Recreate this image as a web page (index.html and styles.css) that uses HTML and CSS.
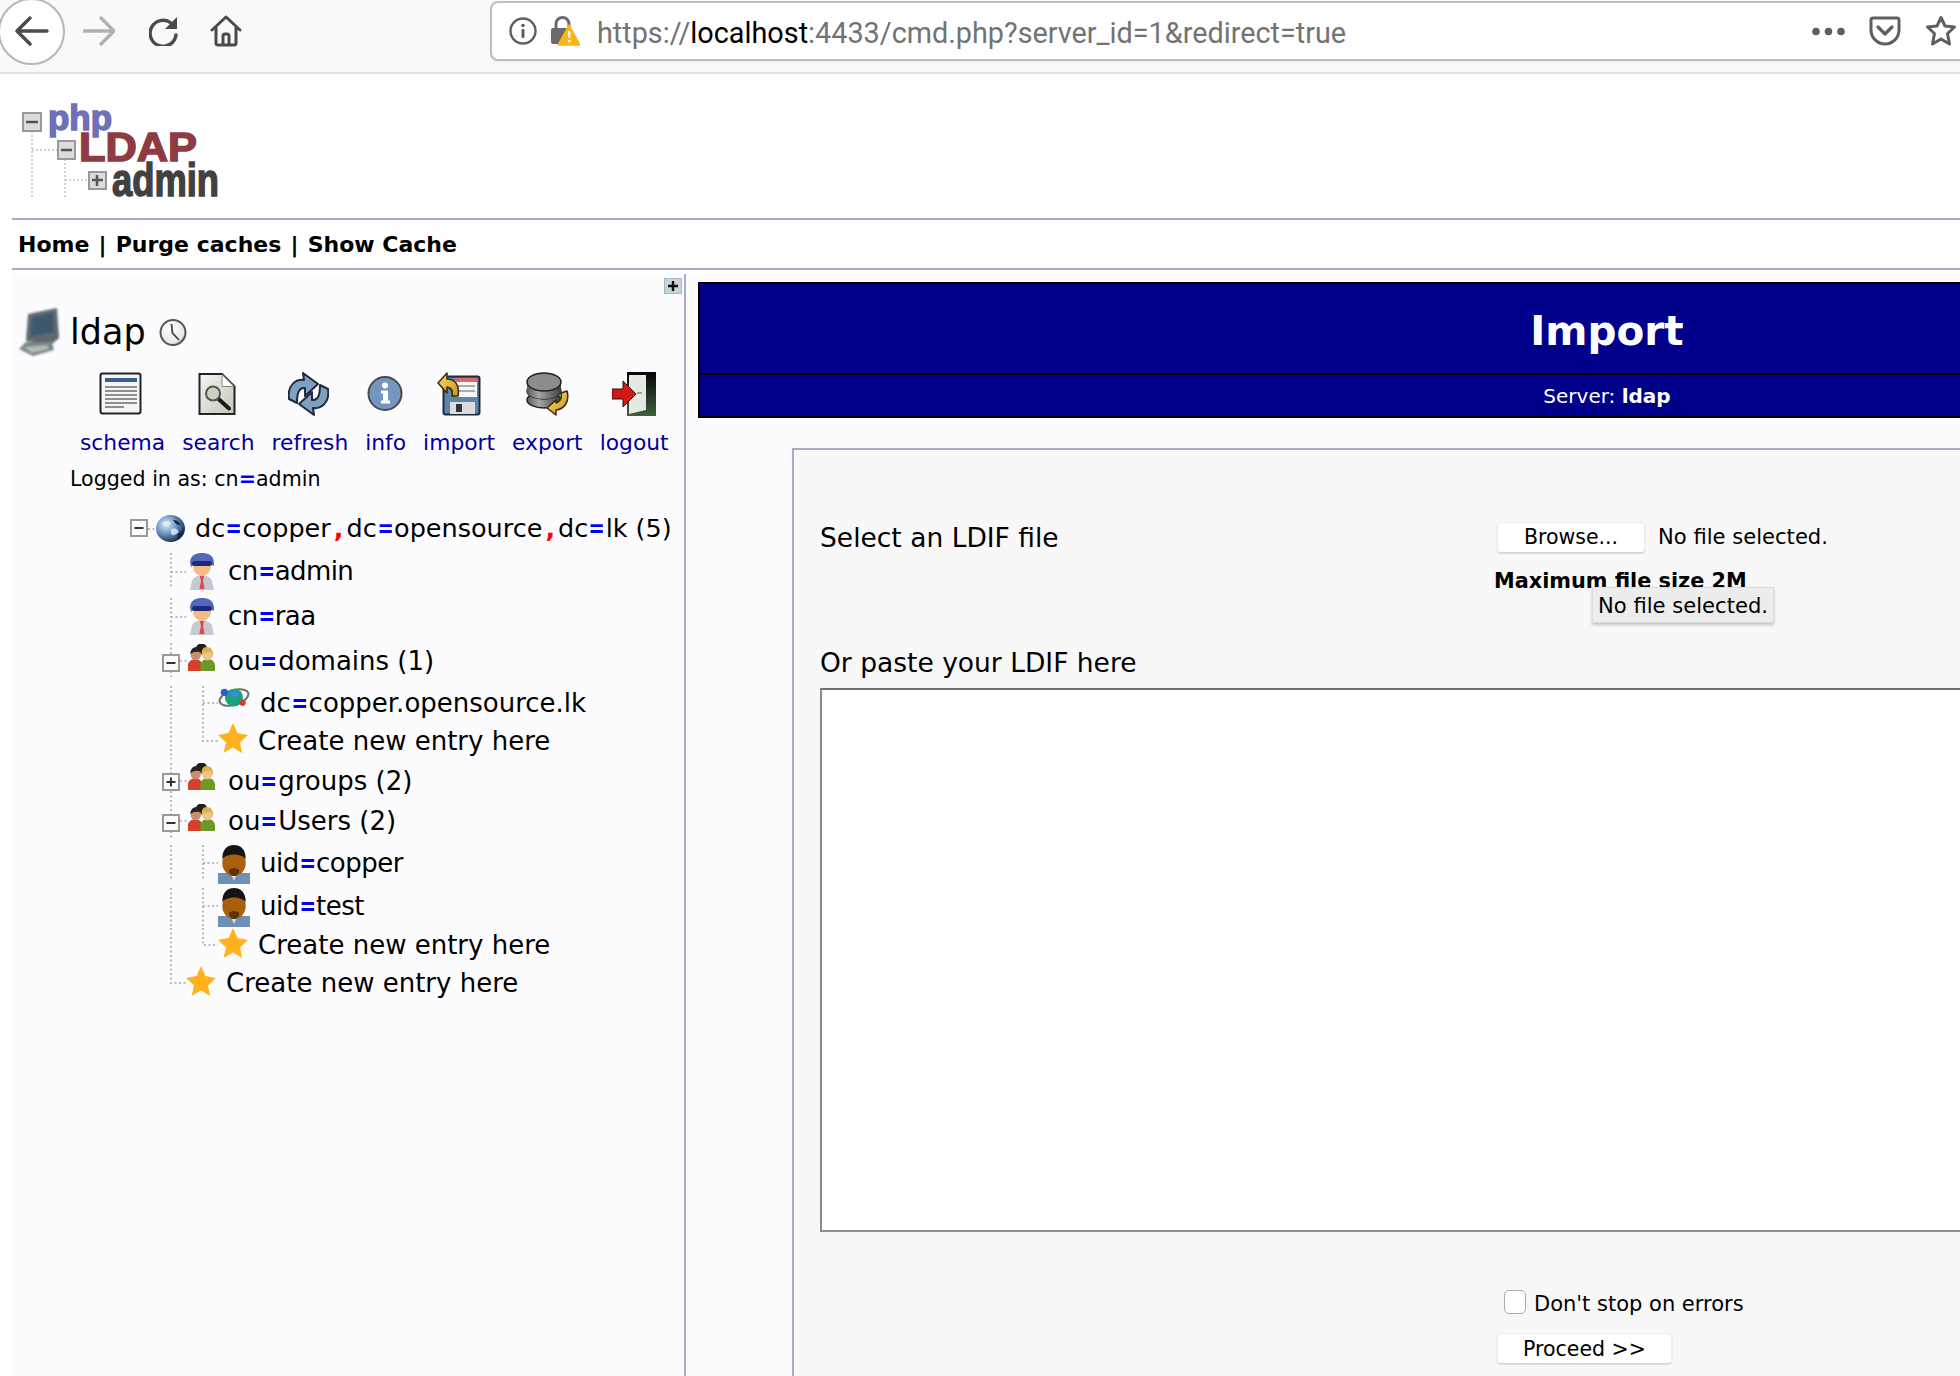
FILE: index.html
```html
<!DOCTYPE html>
<html lang="en">
<head>
<meta charset="utf-8">
<title>phpLDAPadmin - Import</title>
<link rel="stylesheet" href="styles.css">
</head>
<body>
<svg class="sprite" width="0" height="0" aria-hidden="true">
  <defs>
    <radialGradient id="gGlobe" cx="35%" cy="35%" r="75%"><stop offset="0" stop-color="#e4edf5"/><stop offset=".45" stop-color="#6f9ac6"/><stop offset="1" stop-color="#0c1f3c"/></radialGradient>
    <linearGradient id="gDoc" x1="0" y1="0" x2="1" y2="1"><stop offset="0" stop-color="#f6f6f2"/><stop offset="1" stop-color="#c4c4bc"/></linearGradient>
    <linearGradient id="gDb" x1="0" y1="0" x2="1" y2="0"><stop offset="0" stop-color="#5c5c5c"/><stop offset=".35" stop-color="#a6a6a6"/><stop offset="1" stop-color="#3c3c3c"/></linearGradient>
    <linearGradient id="gDoor" x1="0" y1="0" x2="0" y2="1"><stop offset="0" stop-color="#050505"/><stop offset="1" stop-color="#3f5f3f"/></linearGradient>
    <radialGradient id="gClock" cx="40%" cy="35%" r="70%"><stop offset="0" stop-color="#fff"/><stop offset=".8" stop-color="#e8e8e8"/><stop offset="1" stop-color="#9a9a9a"/></radialGradient>
    <linearGradient id="gArrow" x1="0" y1="0" x2="1" y2="1"><stop offset="0" stop-color="#f7dc7a"/><stop offset="1" stop-color="#c99419"/></linearGradient>
  </defs>
  <symbol id="i-minus" viewBox="0 0 18 18"><rect x="1" y="1" width="16" height="16" fill="#fbfbfb" stroke="#9a9a9a" stroke-width="2"/><rect x="4.500" y="8" width="9" height="2" fill="#333"/></symbol>
  <symbol id="i-plus" viewBox="0 0 18 18"><rect x="1" y="1" width="16" height="16" fill="#fbfbfb" stroke="#9a9a9a" stroke-width="2"/><rect x="4.500" y="8" width="9" height="2" fill="#333"/><rect x="8" y="4.500" width="2" height="9" fill="#333"/></symbol>
  <symbol id="i-person" viewBox="0 0 25 37" preserveAspectRatio="none">
    <path d="M1 37 L3 27 Q7 22 12.500 22 Q18 22 22 27 L24 37 Z" fill="#c5c9d4"/>
    <path d="M10.500 23 H14.500 L13.500 28 L15 36 H10 L11.500 28 Z" fill="#e2474b"/>
    <ellipse cx="12.500" cy="14" rx="8.500" ry="9" fill="#f5bb86"/>
    <path d="M1 10 C1 2 7 0 12.500 0 C18 0 24 2 24 10 L24 13 C20 11 18 10 12.500 10 C7 10 4 12 2 14 Z" fill="#5468b8"/>
    <rect x="3" y="8" width="19" height="5" rx="2.500" fill="#1d2a78"/>
  </symbol>
  <symbol id="i-group" viewBox="0 0 26 28" preserveAspectRatio="none">
    <path d="M0 27 V20 Q2 15 8 15 Q13 16 14 22 L14 27 Z" fill="#d63f2e"/>
    <path d="M12 27 V20 Q14 15 19 15 Q25 15 26 21 V27 Z" fill="#6d9a26"/>
    <circle cx="13" cy="5" r="5.500" fill="#1e1e1e"/>
    <ellipse cx="7.500" cy="10.500" rx="5" ry="6" fill="#c98f6c"/>
    <path d="M2 10 Q3 3 8 3 Q13 4 13 9 Q8 6 2 10Z" fill="#2b2020"/>
    <ellipse cx="18.500" cy="10.500" rx="5" ry="6" fill="#efc48c"/>
    <path d="M13 10 Q13 2 19 3 Q25 4 24 13 L22 8 Q17 8 13 10Z" fill="#d8b345"/>
  </symbol>
  <symbol id="i-globe" viewBox="0 0 27 29" preserveAspectRatio="none">
    <circle cx="13.500" cy="14.500" r="13.500" fill="url(#gGlobe)"/>
    <path d="M6 9 Q11 5 14 9 Q12 13 8 12 Z M14 15 Q20 13 21 18 Q17 23 14 20Z" fill="#e8f0f6" opacity=".8"/>
    <path d="M16 6 Q21 6 23 11 Q19 12 16 6Z M20 20 Q24 18 26 14 Q26 22 20 26Z" fill="#14294a"/>
  </symbol>
  <symbol id="i-orb" viewBox="0 0 30 23" preserveAspectRatio="none">
    <ellipse cx="15" cy="12" rx="14" ry="7" fill="none" stroke="#6f6f6f" stroke-width="2" transform="rotate(-18 15 12)"/>
    <circle cx="15" cy="12" r="8.500" fill="#17a37c"/>
    <path d="M11 7 Q17 5 20 9 Q16 13 12 11Z" fill="#3d8ad8"/>
    <circle cx="6" cy="7" r="3.500" fill="#2a5fdb"/>
    <circle cx="23" cy="17" r="3" fill="#cf3a3a"/>
  </symbol>
  <symbol id="i-star" viewBox="0 0 30 30"><path d="M15 0 L19.500 10 L30 12 L22 19.500 L24 30 L15 24.500 L5.500 30 L8 19.500 L0 12 L10.500 10 Z" fill="#ffb21e"/></symbol>
  <symbol id="i-uid" viewBox="0 0 30 39" preserveAspectRatio="none">
    <rect x="0" y="28" width="30" height="11" fill="#6f8fb4"/>
    <path d="M12 29 H18 L15 36 Z" fill="#d8dde4"/>
    <ellipse cx="15" cy="18" rx="11" ry="13" fill="#a8600f"/>
    <path d="M4 14 C4 4 9 0 15 0 C21 0 26 4 26 14 C22 8 8 8 4 14Z" fill="#141414"/>
    <path d="M10 25 Q15 21 20 25 Q19 31 15 31 Q11 31 10 25Z" fill="#5c3208"/>
  </symbol>
  <symbol id="i-computer" viewBox="0 0 41 48">
    <path d="M9 6 L38 0 L40 30 L33 36 L7 33 Z" fill="#60686f"/>
    <path d="M13 10 L34 5 L35 24 L12 28 Z" fill="#3a5872"/>
    <path d="M7 34 L33 34 L35 42 L14 48 L0 41 Z" fill="#7c8487"/>
    <path d="M5 39 L28 37 L30 41 L13 45 Z" fill="#b6bcbc"/>
  </symbol>
  <symbol id="i-clock" viewBox="0 0 28 29">
    <circle cx="14" cy="14.500" r="12.500" fill="url(#gClock)" stroke="#555" stroke-width="2"/>
    <path d="M12.500 6 L13.500 15 L20 22" fill="none" stroke="#444" stroke-width="1.800"/>
  </symbol>
  <symbol id="i-schema" viewBox="0 0 44 44">
    <rect x="1.500" y="1.500" width="40" height="40" rx="2" fill="#f5f5f5" stroke="#222" stroke-width="2"/>
    <rect x="6" y="6" width="32" height="4" fill="#375f93"/>
    <path d="M6 15H38M6 19H38M6 23H38M6 27H38M6 31H38M6 35H25" stroke="#8f8f8f" stroke-width="2"/>
  </symbol>
  <symbol id="i-search" viewBox="0 0 38 43">
    <path d="M1.500 1.500 H24 L36.500 14 V41.500 H1.500 Z" fill="url(#gDoc)" stroke="#222" stroke-width="2"/>
    <path d="M24 2 V14 H36 Z" fill="#fff" stroke="#888"/>
    <path d="M20 26 L31 36" stroke="#1a1a1a" stroke-width="4" stroke-linecap="round"/>
    <circle cx="15" cy="21" r="7" fill="#c9d3c0" stroke="#555" stroke-width="2"/>
  </symbol>
  <symbol id="i-refresh" viewBox="0 0 41 44">
    <g stroke="#1f2b3a" stroke-width="2" fill="#7fa0c2" stroke-linejoin="round">
      <path d="M1 27 C-1 13 8 7 16 8 L15 1 L30 12 L17 24 L17 16 C11 15 9 21 9 31 Z"/>
      <path d="M1 27 C-1 13 8 7 16 8 L15 1 L30 12 L17 24 L17 16 C11 15 9 21 9 31 Z" transform="rotate(180 20.500 22)"/>
    </g>
  </symbol>
  <symbol id="i-info" viewBox="0 0 37 37">
    <circle cx="18" cy="18" r="16.500" fill="#7397bd" stroke="#4a4a4a" stroke-width="2"/>
    <circle cx="18" cy="10" r="3" fill="#fff"/>
    <path d="M14 15 H21 V25 H23 V28 H14 V25 H16 V18 H14Z" fill="#fff"/>
  </symbol>
  <symbol id="i-import" viewBox="0 0 44 44">
    <rect x="6.500" y="4.500" width="36" height="38" rx="2" fill="#5b86a9" stroke="#1d2a38" stroke-width="2"/>
    <rect x="18" y="6" width="22" height="19" fill="#f6f6f6"/>
    <rect x="18" y="6" width="22" height="4" fill="#d96a6a"/>
    <path d="M21 14H38M21 19H38" stroke="#aaa" stroke-width="2"/>
    <rect x="13" y="30" width="25" height="12" fill="#dcdcdc"/>
    <rect x="19" y="32" width="6" height="8" fill="#333"/>
    <path d="M1 11 L10 1 V7 C18 7 23 13 21 24 L15 24 C16 19 15 16 10 15 V21 Z" fill="url(#gArrow)" stroke="#3a2a05" stroke-width="1.500" stroke-linejoin="round"/>
  </symbol>
  <symbol id="i-export" viewBox="0 0 44 44">
    <ellipse cx="19" cy="28" rx="17" ry="8" fill="url(#gDb)" stroke="#222" stroke-width="1.500"/>
    <ellipse cx="19" cy="19" rx="17" ry="8" fill="url(#gDb)" stroke="#222" stroke-width="1.500"/>
    <path d="M2 10 V19 A17 8 0 0 0 36 19 V10Z" fill="url(#gDb)"/>
    <ellipse cx="19" cy="10" rx="17" ry="9" fill="#8d8d8d" stroke="#222" stroke-width="1.500"/>
    <path d="M22 36 L31 28 V31 C35 30 37 27 36 21 L42 19 C45 30 39 37 31 38 V43 Z" fill="url(#gArrow)" stroke="#3a2a05" stroke-width="1.500" stroke-linejoin="round"/>
  </symbol>
  <symbol id="i-logout" viewBox="0 0 44 44">
    <rect x="15" y="0" width="29" height="44" fill="url(#gDoor)"/>
    <path d="M17 3 L34 3 V38 L17 42Z" fill="#e6e9e2"/>
    <path d="M0 17 H11 V9 L24 22 L11 35 V27 H0Z" fill="#cf1b14" stroke="#3a0a08"/>
    <path d="M25 21 H30" stroke="#555"/>
  </symbol>
</svg>

<header class="chrome">
  <button class="back" type="button" aria-label="Back">
    <svg width="34" height="30" viewBox="0 0 34 30"><path d="M32 15H3M15 2L2 15L15 28" fill="none" stroke="#4a4a4f" stroke-width="3.400" stroke-linecap="round" stroke-linejoin="round"/></svg>
  </button>
  <svg class="nav-forward" width="32" height="30" viewBox="0 0 32 30"><path d="M1 15H30M18 2L31 15L18 28" fill="none" stroke="#b1b1b3" stroke-width="3.400" stroke-linecap="round" stroke-linejoin="round"/></svg>
  <svg class="nav-reload" width="30" height="30" viewBox="0 0 30 30"><path d="M22 7 A13 13 0 1 0 27 19" fill="none" stroke="#4a4a4f" stroke-width="3.400" stroke-linecap="round"/><path d="M28 1 V13 H16 Z" fill="#4a4a4f"/></svg>
  <svg class="nav-home" width="32" height="32" viewBox="0 0 32 32"><path d="M2 15 L16 2 L30 15 M6 12 V28 Q6 30 8 30 H24 Q26 30 26 28 V12" fill="none" stroke="#4a4a4f" stroke-width="3" stroke-linecap="round" stroke-linejoin="round"/><path d="M13 30 V21 Q13 19 15 19 H17 Q19 19 19 21 V30" fill="none" stroke="#4a4a4f" stroke-width="3"/></svg>
  <div class="urlbar">
    <svg class="url-info" width="28" height="28" viewBox="0 0 28 28"><circle cx="14" cy="14" r="12.500" fill="none" stroke="#5f5f63" stroke-width="2.400"/><circle cx="14" cy="8.500" r="1.800" fill="#5f5f63"/><rect x="12.500" y="12" width="3" height="9" rx="1" fill="#5f5f63"/></svg>
    <svg class="url-lock" width="30" height="30" viewBox="0 0 30 30"><path d="M6 13 V8 A6.500 6.500 0 0 1 19 8 V11" fill="none" stroke="#6a6a6e" stroke-width="3"/><rect x="1" y="12" width="18" height="16" rx="2" fill="#6a6a6e"/><path d="M19 9 L30 29 H8 Z" fill="#ffb40f" stroke="#ffb40f" stroke-width="1.500" stroke-linejoin="round"/><rect x="18" y="15" width="2.400" height="7" fill="#fff"/><rect x="18" y="24" width="2.400" height="2.400" fill="#fff"/></svg>
    <span class="url-text">https://<b class="url-host">localhost</b>:4433/cmd.php?server_id=1&amp;redirect=true</span>
    <svg class="url-more" width="33" height="9" viewBox="0 0 33 9"><circle cx="4" cy="4.500" r="3.800" fill="#5f5f63"/><circle cx="16.500" cy="4.500" r="3.800" fill="#5f5f63"/><circle cx="29" cy="4.500" r="3.800" fill="#5f5f63"/></svg>
    <svg class="url-pocket" width="32" height="30" viewBox="0 0 32 30"><path d="M2 4 Q2 2 4 2 H28 Q30 2 30 4 V14 A14 14 0 0 1 2 14 Z" fill="none" stroke="#5f5f63" stroke-width="3"/><path d="M9 11 L16 18 L23 11" fill="none" stroke="#5f5f63" stroke-width="3.200" stroke-linecap="round" stroke-linejoin="round"/></svg>
    <svg class="url-star" width="32" height="32" viewBox="0 0 32 32"><path d="M16 2.500 L20 11 L29.500 12 L22.500 18.500 L24.500 29 L16 24 L7.500 29 L9.500 18.500 L2.500 12 L12 11 Z" fill="none" stroke="#5f5f63" stroke-width="3" stroke-linejoin="round"/></svg>
  </div>
</header>

<div class="page">
  <div class="logo-row">
    <svg class="logo" width="220" height="122" viewBox="12 90 220 122">
      <g fill="none" stroke="#d0d0d0" stroke-width="2" stroke-dasharray="2 2">
        <path d="M32 131V198M65 159V198M32 150H57M65 180H88"/>
      </g>
      <g fill="#dcdcdc" stroke="#999" stroke-width="2">
        <rect x="23" y="113" width="18" height="18"/><rect x="58" y="141" width="17" height="18"/><rect x="89" y="172" width="17" height="17"/>
      </g>
      <path d="M26 122H38M61 150H72M92 180H103M97 175V186" stroke="#555" stroke-width="2.500"/>
      <text class="logo-php" x="48" y="130" textLength="64" lengthAdjust="spacingAndGlyphs">php</text>
      <text class="logo-ldap" x="79" y="161" textLength="118" lengthAdjust="spacingAndGlyphs">LDAP</text>
      <text class="logo-admin" x="112" y="196" textLength="107" lengthAdjust="spacingAndGlyphs">admin</text>
    </svg>
  </div>
  <nav class="topnav"><a href="#">Home</a> | <a href="#">Purge caches</a> | <a href="#">Show Cache</a></nav>
  <div class="layout">
    <aside class="sidebar">
      <div class="toggle-row"><svg class="ic" width="18" height="16" viewBox="0 0 18 16"><rect width="18" height="16" fill="#c8d4dc" stroke="#8a9aa5"/><path d="M4 8H14M9 3V13" stroke="#111" stroke-width="2.400"/></svg></div>
      <div class="server-row">
        <svg class="ic ic-blur" width="41" height="48"><use href="#i-computer"/></svg>
        <span class="server-name">ldap</span>
        <svg class="ic" width="28" height="29"><use href="#i-clock"/></svg>
      </div>
      <ul class="tools">
        <li class="tool"><svg class="ic" width="44" height="44"><use href="#i-schema"/></svg><a href="#">schema</a></li>
        <li class="tool"><svg class="ic" width="38" height="44"><use href="#i-search"/></svg><a href="#">search</a></li>
        <li class="tool"><svg class="ic" width="41" height="44"><use href="#i-refresh"/></svg><a href="#">refresh</a></li>
        <li class="tool"><svg class="ic" width="37" height="44"><use href="#i-info"/></svg><a href="#">info</a></li>
        <li class="tool"><svg class="ic" width="44" height="44"><use href="#i-import"/></svg><a href="#">import</a></li>
        <li class="tool"><svg class="ic" width="44" height="44"><use href="#i-export"/></svg><a href="#">export</a></li>
        <li class="tool"><svg class="ic" width="44" height="44"><use href="#i-logout"/></svg><a href="#">logout</a></li>
      </ul>
      <p class="logged">Logged in as: cn<b class="eq">=</b>admin</p>
      <div class="tree">
        <svg class="guides" width="240" height="500" viewBox="120 506 240 500">
          <g fill="none" stroke="#b9b9b9" stroke-width="2" stroke-dasharray="2 2.500">
            <path d="M148 528H156M171 552V586M171 571H186M171 597V636M171 616H186M171 642V653M171 670V676M180 660H188"/>
            <path d="M171 685V758M203 685V740H218M203 702H218"/>
            <path d="M171 762V773M171 790V813M171 830V838M180 780H188M180 820H188"/>
            <path d="M171 844V878M171 887V925M171 927V982H186M203 844V878M203 862H218M203 887V925M203 905H218M203 927V944H218"/>
          </g>
        </svg>
        <div class="node n-root"><svg class="tbox" width="18" height="18"><use href="#i-minus"/></svg><svg class="ic" width="29" height="29"><use href="#i-globe"/></svg><span>dc<b class="eq">=</b>copper<b class="sep">,</b>dc<b class="eq">=</b>opensource<b class="sep">,</b>dc<b class="eq">=</b>lk (5)</span></div>
        <div class="node n-leaf"><svg class="ic" width="26" height="37"><use href="#i-person"/></svg><span>cn<b class="eq">=</b>admin</span></div>
        <div class="node n-leaf"><svg class="ic" width="26" height="37"><use href="#i-person"/></svg><span>cn<b class="eq">=</b>raa</span></div>
        <div class="node n-ou"><svg class="tbox" width="18" height="18"><use href="#i-minus"/></svg><svg class="ic" width="27" height="28"><use href="#i-group"/></svg><span>ou<b class="eq">=</b>domains (1)</span></div>
        <div class="node n-sub n-orb"><svg class="ic" width="32" height="24"><use href="#i-orb"/></svg><span>dc<b class="eq">=</b>copper.opensource.lk</span></div>
        <div class="node n-substar"><svg class="ic" width="30" height="30"><use href="#i-star"/></svg><span>Create new entry here</span></div>
        <div class="node n-ou"><svg class="tbox" width="18" height="18"><use href="#i-plus"/></svg><svg class="ic" width="27" height="28"><use href="#i-group"/></svg><span>ou<b class="eq">=</b>groups (2)</span></div>
        <div class="node n-ou"><svg class="tbox" width="18" height="18"><use href="#i-minus"/></svg><svg class="ic" width="27" height="28"><use href="#i-group"/></svg><span>ou<b class="eq">=</b>Users (2)</span></div>
        <div class="node n-sub n-uid"><svg class="ic" width="32" height="39"><use href="#i-uid"/></svg><span>uid<b class="eq">=</b>copper</span></div>
        <div class="node n-sub n-uid"><svg class="ic" width="32" height="39"><use href="#i-uid"/></svg><span>uid<b class="eq">=</b>test</span></div>
        <div class="node n-substar"><svg class="ic" width="30" height="30"><use href="#i-star"/></svg><span>Create new entry here</span></div>
        <div class="node n-rootstar"><svg class="ic" width="30" height="30"><use href="#i-star"/></svg><span>Create new entry here</span></div>
      </div>
    </aside>
    <main class="main">
      <section class="title-box">
        <h1 class="title">Import</h1>
        <div class="subtitle">Server: <b>ldap</b></div>
      </section>
      <form class="form-box">
        <div class="file-row">
          <label class="big-label">Select an LDIF file</label>
          <div class="file-ctl"><button class="btn btn-browse" type="button">Browse...</button><span class="file-name">No file selected.</span></div>
        </div>
        <div class="max-row">
          <b class="max-size">Maximum file size 2M</b>
          <div class="tooltip">No file selected.</div>
        </div>
        <label class="big-label paste-label">Or paste your LDIF here</label>
        <textarea class="ldif"></textarea>
        <div class="actions">
          <label class="check"><input type="checkbox"><span>Don't stop on errors</span></label>
          <button class="btn btn-proceed" type="button">Proceed &gt;&gt;</button>
        </div>
      </form>
    </main>
  </div>
</div>
</body>
</html>
```
FILE: styles.css
```css
* { box-sizing: border-box; }
html, body { margin: 0; padding: 0; height: 1376px; overflow: hidden; background: #fff; }
body { width: 1960px; font-family: "DejaVu Sans", Verdana, sans-serif; color: #000; }
.sprite { position: absolute; }

.chrome { height: 74px; padding-bottom: 10px; background: #f9f9fa; border-bottom: 2px solid #e2e2e4; display: flex; align-items: center; }
.back { width: 67px; height: 67px; margin-left: -2px; flex: none; border-radius: 50%; border: 2px solid #b6b6b8; background: #fff; padding: 0; display: flex; align-items: center; justify-content: center; }
.nav-forward { margin-left: 18px; flex: none; }
.nav-reload { margin-left: 34px; flex: none; }
.nav-home { margin-left: 31px; flex: none; }
.urlbar { flex: 1; margin-left: 248px; margin-right: -20px; height: 60px; border: 2px solid #bdbdbd; border-radius: 8px; background: #fff; display: flex; align-items: center; padding-left: 17px; padding-right: 21px; box-shadow: 0 1px 2px rgba(0,0,0,.05); }
.url-info { flex: none; }
.url-lock { flex: none; margin-left: 13px; }
.url-text { margin-left: 17px; padding-top: 3px; font: 28.800px Roboto, sans-serif; color: #737373; white-space: nowrap; flex: 1; }
.url-host { font-weight: 400; color: #000; }
.url-more { flex: none; }
.url-pocket { flex: none; margin-left: 24px; }
.url-star { flex: none; margin-left: 24px; }

.page { width: 2520px; padding-left: 12px; }
.logo-row { height: 144px; margin-left: -12px; padding-top: 16px; padding-left: 12px; }
.logo { display: block; }
.logo text { font-family: "Liberation Sans", sans-serif; font-weight: 700; stroke-width: 1.500px; }
.logo-php { font-size: 35px; fill: #6d72b8; stroke: #6d72b8; }
.logo-ldap { font-size: 40px; fill: #8e3b42; stroke: #8e3b42; }
.logo-admin { font-size: 46px; fill: #414141; stroke: #414141; }

.topnav { height: 52px; border-top: 2px solid #aaaacc; border-bottom: 2px solid #aaaacc; padding-left: 6px; font-size: 22px; font-weight: 700; word-spacing: 1.500px; line-height: 50px; }
.topnav a { color: #000; text-decoration: none; word-spacing: 0; }

.layout { margin-top: 4px; display: flex; align-items: stretch; background: #fcfcff; height: 1102px; }
.sidebar { width: 674px; flex: none; border-right: 2px solid #aaaacc; }
.toggle-row { padding-top: 4px; padding-right: 2px; height: 20px; display: flex; justify-content: flex-end; }
.server-row { margin-top: 14px; height: 48px; padding-left: 7px; display: flex; align-items: center; }
.server-name { margin-left: 10px; margin-right: 13px; font-size: 35px; line-height: 48px; }
.ic { display: block; flex: none; filter: blur(.4px); }
.ic-blur { filter: blur(.8px); }
.tbox { display: block; flex: none; }

.tools { list-style: none; margin: 16px 0 0; padding: 0 0 0 68px; display: flex; gap: 17px; }
.tool { display: flex; flex-direction: column; align-items: center; gap: 14px; font-size: 21.800px; line-height: 26px; }
.tool:nth-child(-n+3) .ic { margin-right: 3px; }
.tool a { color: #0000a0; text-decoration: none; }
.logged { margin: 10px 0 0; padding-left: 58px; font-size: 20.600px; line-height: 26px; }
.eq { color: #0000ff; }
.sep { color: #ff0000; margin: 0 3px; }

.tree { margin-top: 15px; position: relative; display: grid; grid-template-rows: 42px 43px 47px 44px 39px 37px 43px 38px 46px 40px 38px 38px; font-size: 26px; }
.tree .eq { display: inline-block; transform: scaleX(.77); margin: 0 -2px; }
.guides { position: absolute; left: 108px; top: 0; }
.node { position: relative; display: flex; align-items: center; white-space: nowrap; }
.n-root { padding-left: 118px; font-size: 25.500px; }
.n-root .ic { margin-left: 8px; margin-right: 10px; }
.n-leaf { padding-left: 177px; letter-spacing: -.6px; }
.n-leaf .ic { margin-right: 13px; margin-top: 2px; }
.n-ou { padding-left: 150px; }
.n-ou .tbox { margin-top: 3px; }
.n-ou .ic { margin-left: 8px; margin-right: 13px; margin-top: -7px; }
.n-sub { padding-left: 206px; }
.n-sub .ic { margin-right: 10px; }
.n-orb .ic { margin-top: -11px; }
.n-uid { letter-spacing: -.5px; }
.n-uid .ic { margin-top: 3px; }
.n-substar { padding-left: 206px; }
.n-substar .ic { margin-right: 10px; margin-top: -5px; }
.n-rootstar { padding-left: 174px; }
.n-rootstar .ic { margin-right: 10px; margin-top: -4px; }

.main { flex: 1; padding: 8px 0 0 12px; min-width: 0; }
.title-box { width: 1816px; height: 136px; background: #00008b; border: 2px solid #000; border-width: 2px 0 2px 2px; color: #fff; text-align: center; display: flex; flex-direction: column; }
.title { margin: 0; height: 91px; padding-top: 5px; border-bottom: 2px solid #000; font-size: 40.500px; line-height: 85px; font-weight: 700; }
.subtitle { font-size: 20px; line-height: 43px; }
.form-box { width: 1628px; height: 1000px; margin: 30px 0 0 94px; background: #f8f8f8; border: 2px solid #aaaacc; padding: 72px 0 0 26px; }
.file-row { display: grid; grid-template-columns: 677px 1fr; align-items: center; height: 31px; }
.big-label { font-size: 26.500px; line-height: 30px; }
.file-ctl { display: flex; align-items: center; }
.btn { font: 20.500px "DejaVu Sans", Verdana, sans-serif; height: 31px; background: #fff; border: 1px solid #ececec; border-bottom-color: #d4d4d4; border-radius: 4px; padding: 0; color: #000; box-shadow: 0 1px 2px rgba(0,0,0,.12); }
.btn-browse { width: 148px; padding-bottom: 2px; }
.file-name { margin-left: 13px; margin-top: -3px; font-size: 21.100px; }
.max-row { position: relative; margin: 15px 0 0 674px; height: 26px; line-height: 26px; }
.max-size { font-size: 20.800px; }
.tooltip { position: absolute; left: 98px; top: 19px; width: 182px; height: 36px; background: #ededed; border: 1px solid #dcdcdc; box-shadow: 0 2px 3px rgba(0,0,0,.22); font-size: 21.100px; line-height: 36px; text-align: center; white-space: nowrap; }
.paste-label { display: block; margin-top: 54px; }
.ldif { display: block; width: 1500px; height: 544px; margin-top: 10px; background: #fff; border: 2px solid #8f8f8f; border-top-color: #707070; border-left-color: #8a8a8a; resize: none; }
.actions { margin: 58px 0 0 677px; }
.check { display: flex; align-items: center; height: 24px; font-size: 21px; }
.check span { padding-top: 3px; }
.check input { appearance: none; margin: 0 8px 0 7px; width: 22px; height: 24px; background: #fff; border: 1.500px solid #aaa; border-radius: 5px; flex: none; }
.btn-proceed { display: block; width: 175px; margin-top: 19px; }
```
